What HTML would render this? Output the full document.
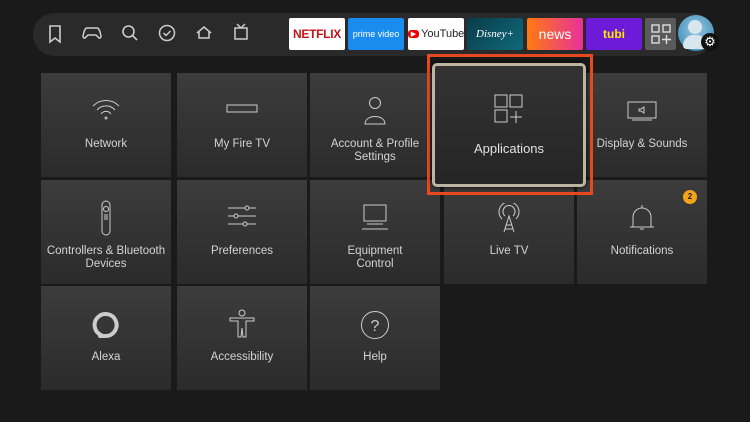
<!DOCTYPE html>
<html><head><meta charset="utf-8"><style>
*{margin:0;padding:0;box-sizing:border-box}
body{width:750px;height:422px;background:#1a1a1a;position:relative;overflow:hidden;font-family:"Liberation Sans",sans-serif}
.nav{position:absolute;left:33px;top:13px;width:680px;height:43px;border-radius:22px;background:#2a2a2a}
.ni{position:absolute;top:24px}
.app{position:absolute;top:18px;height:32px;width:56px;border-radius:2px;display:flex;align-items:center;justify-content:center;color:#fff;overflow:hidden}
.t{position:absolute;width:130px;height:104px;background:linear-gradient(#3c3c3c,#2b2b2b);color:#d4d4d4;font-size:11.5px;text-align:center;line-height:13px}
.t .l{position:absolute;left:0;right:0;top:65px}
.t svg{position:absolute;left:50%;transform:translateX(-50%)}
</style></head><body>
<div class="nav"></div>
<svg class="ni" style="left:47px" width="16" height="20" viewBox="0 0 16 20" fill="none" stroke="#ccc" stroke-width="1.6"><path d="M3 2h10v16l-5-4-5 4z"/></svg>
<svg class="ni" style="left:82px;top:26px" width="20" height="14" viewBox="0 0 20 14" fill="none" stroke="#ccc" stroke-width="1.5"><path d="M5 2h10c2 0 3 3 4 8 0 2-2 3-3 1l-2-2H6l-2 2c-1 2-3 1-3-1 1-5 2-8 4-8z"/></svg>
<svg class="ni" style="left:121px" width="18" height="18" viewBox="0 0 18 18" fill="none" stroke="#ccc" stroke-width="1.6"><circle cx="7.5" cy="7.5" r="5.5"/><path d="M11.5 11.5L16 16"/></svg>
<svg class="ni" style="left:158px" width="18" height="18" viewBox="0 0 18 18" fill="none" stroke="#ccc" stroke-width="1.5"><circle cx="9" cy="9" r="7.5"/><path d="M5.5 9l2.5 2.5 4.5-4.5"/></svg>
<svg class="ni" style="left:195px;top:25px" width="18" height="16" viewBox="0 0 18 16" fill="none" stroke="#ccc" stroke-width="1.5"><path d="M2 8L9 2l7 6M4 7v6h10V7"/></svg>
<svg class="ni" style="left:233px;top:23px" width="16" height="18" viewBox="0 0 16 18" fill="none" stroke="#ccc" stroke-width="1.5"><path d="M4 1l4 4 4-4M2 5h12v11H2z"/></svg>
<div class="app" style="left:289px;background:#fff;color:#c4131b;font-weight:bold;font-size:12px;letter-spacing:-0.3px">NETFLIX</div>
<div class="app" style="left:348px;background:#1a8cf0;font-size:9px">prime video</div>
<div class="app" style="left:408px;background:#fff;color:#222;font-size:11px"><span style="background:#e00;color:#fff;border-radius:3px;padding:0 3px;font-size:7px;margin-right:2px">▶</span>YouTube</div>
<div class="app" style="left:467px;background:linear-gradient(135deg,#0a3b4a,#0f6a7a);font-size:11px;font-family:'Liberation Serif',serif;font-style:italic">Disney+</div>
<div class="app" style="left:527px;background:linear-gradient(90deg,#ff7a10,#e8309a);font-size:14px">news</div>
<div class="app" style="left:586px;background:#6d1ad9;color:#ffea00;font-weight:bold;font-size:12px">tubi</div>
<div class="app" style="left:645px;width:31px;background:#5a5a5a"><svg width="20" height="20" viewBox="0 0 20 20" fill="none" stroke="#ddd" stroke-width="1.4"><rect x="1" y="1" width="7" height="7"/><rect x="12" y="1" width="7" height="7"/><rect x="1" y="12" width="7" height="7"/><path d="M15.5 11v9M11 15.5h9"/></svg></div>
<div style="position:absolute;left:678px;top:15px;width:36px;height:36px;border-radius:50%;background:radial-gradient(circle at 50% 40%,#9bc7de,#2a84b4)"></div>
<div style="position:absolute;left:688px;top:20px;width:14px;height:14px;border-radius:50%;background:#d8e6ee"></div>
<div style="position:absolute;left:683px;top:35px;width:24px;height:14px;border-radius:12px 12px 4px 4px;background:#d8e6ee"></div>
<div style="position:absolute;left:701px;top:33px;width:18px;height:18px;border-radius:50%;background:#111;color:#fff;font-size:13px;line-height:18px;text-align:center">⚙</div>

<div class="t" style="left:41px;top:73px"><svg style="top:25px" width="30" height="22" viewBox="0 0 30 22" fill="none" stroke="#ccc" stroke-width="1"><path d="M2 8a18 18 0 0126 0M6 12a12 12 0 0118 0M10 16a6 6 0 0110 0"/><circle cx="15" cy="20" r="1"/></svg><div class="l">Network</div></div>
<div class="t" style="left:177px;top:73px"><svg style="top:31px" width="32" height="10" viewBox="0 0 32 10" fill="none" stroke="#ccc" stroke-width="1"><rect x="1" y="1" width="30" height="7"/></svg><div class="l">My Fire TV</div></div>
<div class="t" style="left:310px;top:73px"><svg style="top:23px" width="22" height="30" viewBox="0 0 22 30" fill="none" stroke="#ccc" stroke-width="1"><circle cx="11" cy="7" r="5.5"/><path d="M1 28c0-10 20-10 20 0z"/></svg><div class="l">Account &amp; Profile<br>Settings</div></div>
<div class="t" style="left:577px;top:73px"><svg style="top:28px" width="30" height="20" viewBox="0 0 30 20" fill="none" stroke="#ccc" stroke-width="1"><rect x="1" y="1" width="28" height="16"/><path d="M12 8h2l3-2v6l-3-2h-2zM5 19h20"/></svg><div class="l">Display &amp; Sounds</div></div>

<div class="t" style="left:41px;top:180px"><svg style="top:20px" width="12" height="36" viewBox="0 0 12 36" fill="none" stroke="#ccc" stroke-width="1"><rect x="2" y="1" width="8" height="34" rx="4"/><circle cx="6" cy="9" r="2.5"/><path d="M4 15h4M4 17h4M4 19h4"/></svg><div class="l">Controllers &amp; Bluetooth<br>Devices</div></div>
<div class="t" style="left:177px;top:180px"><svg style="top:25px" width="30" height="22" viewBox="0 0 30 22" fill="none" stroke="#ccc" stroke-width="1"><path d="M1 3h17M22 3h7M1 11h6M11 11h18M1 19h15M20 19h9"/><circle cx="20" cy="3" r="2"/><circle cx="9" cy="11" r="2"/><circle cx="18" cy="19" r="2"/></svg><div class="l">Preferences</div></div>
<div class="t" style="left:310px;top:180px"><svg style="top:24px" width="28" height="26" viewBox="0 0 28 26" fill="none" stroke="#ccc" stroke-width="1"><rect x="3" y="1" width="22" height="16"/><path d="M6 20h16M1 25h26"/></svg><div class="l">Equipment<br>Control</div></div>
<div class="t" style="left:444px;top:180px"><svg style="top:23px" width="28" height="30" viewBox="0 0 28 30" fill="none" stroke="#ccc" stroke-width="1"><path d="M7 16a10 10 0 1114 0M10 13a6 6 0 118 0M9 29l5-16 5 16M11 22h6M10 26h8"/></svg><div class="l">Live TV</div></div>
<div class="t" style="left:577px;top:180px"><svg style="top:24px" width="26" height="28" viewBox="0 0 26 28" fill="none" stroke="#ccc" stroke-width="1"><path d="M13 1v3M4 23V13a9 9 0 0118 0v10zM1 23h24M11 25h4"/></svg><div class="l">Notifications</div>
<div style="position:absolute;right:10px;top:10px;width:14px;height:14px;border-radius:50%;background:#f7a21b;color:#222;font-size:8px;line-height:14px;font-weight:bold">2</div></div>

<div class="t" style="left:41px;top:286px"><svg style="top:25px" width="28" height="28" viewBox="0 0 28 28" fill="none" stroke="#ccc" stroke-width="4"><path d="M9 24A11 11 0 1114 25H8z" stroke-linejoin="round"/></svg><div class="l">Alexa</div></div>
<div class="t" style="left:177px;top:286px"><svg style="top:23px" width="26" height="30" viewBox="0 0 26 30" fill="none" stroke="#ccc" stroke-width="1"><circle cx="13" cy="4" r="3"/><path d="M1 9h24v3h-8v16h-3l-1-9-1 9H9V12H1z"/></svg><div class="l">Accessibility</div></div>
<div class="t" style="left:310px;top:286px"><svg style="top:24px" width="30" height="30" viewBox="0 0 30 30" fill="none" stroke="#ccc" stroke-width="1"><circle cx="15" cy="15" r="13.5"/><text x="15" y="21" font-size="16" fill="#ccc" stroke="none" text-anchor="middle" font-family="Liberation Sans">?</text></svg><div class="l">Help</div></div>

<div style="position:absolute;left:427px;top:54px;width:166px;height:141px;border:3px solid #e8481f"></div>
<div style="position:absolute;left:432px;top:63px;width:154px;height:124px;border:3px solid #bdb4a2;border-radius:5px;background:linear-gradient(#333,#252525);box-shadow:0 0 4px #000;color:#e0e0e0;font-size:13px;text-align:center">
<svg style="position:absolute;left:59px;top:28px" width="30" height="30" viewBox="0 0 30 30" fill="none" stroke="#ccc" stroke-width="1"><rect x="1" y="1" width="12" height="12"/><rect x="16" y="1" width="12" height="12"/><rect x="1" y="16" width="12" height="12"/><path d="M22 17v12M16 23h12"/></svg>
<div style="position:absolute;left:0;right:0;top:75px">Applications</div></div>
</body></html>
